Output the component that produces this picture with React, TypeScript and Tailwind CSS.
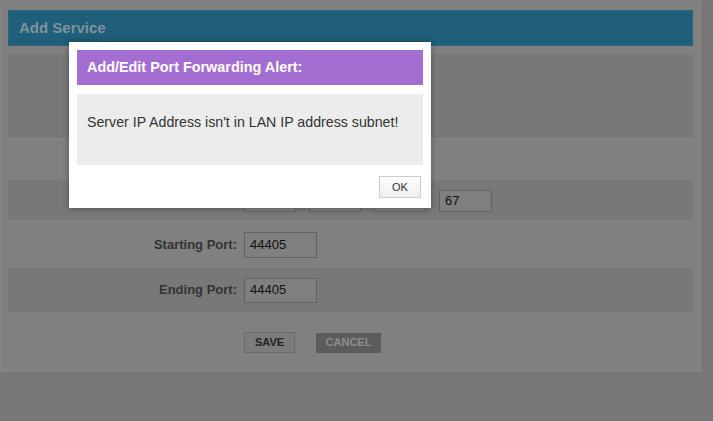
import React from 'react';

const font = { fontFamily: '"Liberation Sans", Arial, sans-serif' };

const Field: React.FC<{ value?: string; w: string; h: string }> = ({ value, w, h }) => (
  <div className={`${w} ${h} border border-[#626262] bg-[#7f7f7f] flex items-center pl-[5px] text-[13px] text-[#111]`}>
    {value}
  </div>
);

const App: React.FC = () => {
  return (
    <div className="relative w-[713px] h-[421px] bg-[#777777] overflow-hidden" style={font}>
      {/* dimmed page behind the alert */}
      <div className="w-[701px] h-[372px] bg-[#808080] border border-[#868686] pt-[9px] px-[7px] flex flex-col">
        <div className="h-[36px] bg-[#1f5f79] border border-[#2a6680] flex items-center pl-[10px]">
          <span className="text-[15px] font-bold text-[#7e939c]">Add Service</span>
        </div>

        <div className="mt-[8px] h-[85px] bg-[#787878] border-b border-[#858585]" />

        <div className="h-[41px]" />

        <div className="h-[41px] bg-[#787878] border-b border-[#858585] flex items-center">
          <div className="w-[236px]" />
          <div className="flex gap-[13px] mt-[1px]">
            <Field w="w-[52px]" h="h-[22px]" />
            <Field w="w-[52px]" h="h-[22px]" />
            <Field w="w-[52px]" h="h-[22px]" />
            <Field w="w-[53px]" h="h-[22px]" value="67" />
          </div>
        </div>

        <div className="h-[47px] flex items-center">
          <div className="w-[229px] text-right text-[13px] font-bold text-[#333]">Starting Port:</div>
          <div className="ml-[7px] mt-[1px]">
            <Field w="w-[73px]" h="h-[26px]" value="44405" />
          </div>
        </div>

        <div className="h-[45px] bg-[#787878] border-b border-[#858585] flex items-center">
          <div className="w-[229px] text-right text-[13px] font-bold text-[#333]">Ending Port:</div>
          <div className="ml-[7px]">
            <Field w="w-[73px]" h="h-[25px]" value="44405" />
          </div>
        </div>

        <div className="flex items-center pt-[19px]">
          <div className="w-[236px]" />
          <div className="w-[51px] h-[21px] border border-[#6a6a6a] bg-[#7c7c7c] flex items-center justify-center text-[11px] font-bold text-[#222]">
            SAVE
          </div>
          <div className="ml-[21px] w-[65px] h-[20px] bg-[#5c5c5c] flex items-center justify-center text-[11px] font-bold text-[#8c8c8c]">
            CANCEL
          </div>
        </div>
      </div>

      {/* alert dialog */}
      <div className="absolute left-[69px] top-[42px] w-[362px] h-[166px] bg-white p-[8px] shadow-[0_0_6px_rgba(0,0,0,0.35)]">
        <div className="h-[35px] bg-[#a46dd2] flex items-center pl-[10px]">
          <span className="text-[14.4px] font-bold text-white">Add/Edit Port Forwarding Alert:</span>
        </div>
        <div className="mt-[9px] h-[71px] bg-[#ececec] pl-[10px] pt-[16px]">
          <span className="text-[14.2px] text-[#333]">Server IP Address isn't in LAN IP address subnet!</span>
        </div>
        <div className="flex justify-end mt-[11px] pr-[2px]">
          <div className="w-[42px] h-[22px] border border-[#cccccc] bg-gradient-to-b from-white to-[#eeeeee] flex items-center justify-center text-[11px] text-[#333]">
            OK
          </div>
        </div>
      </div>
    </div>
  );
};

export default App;
